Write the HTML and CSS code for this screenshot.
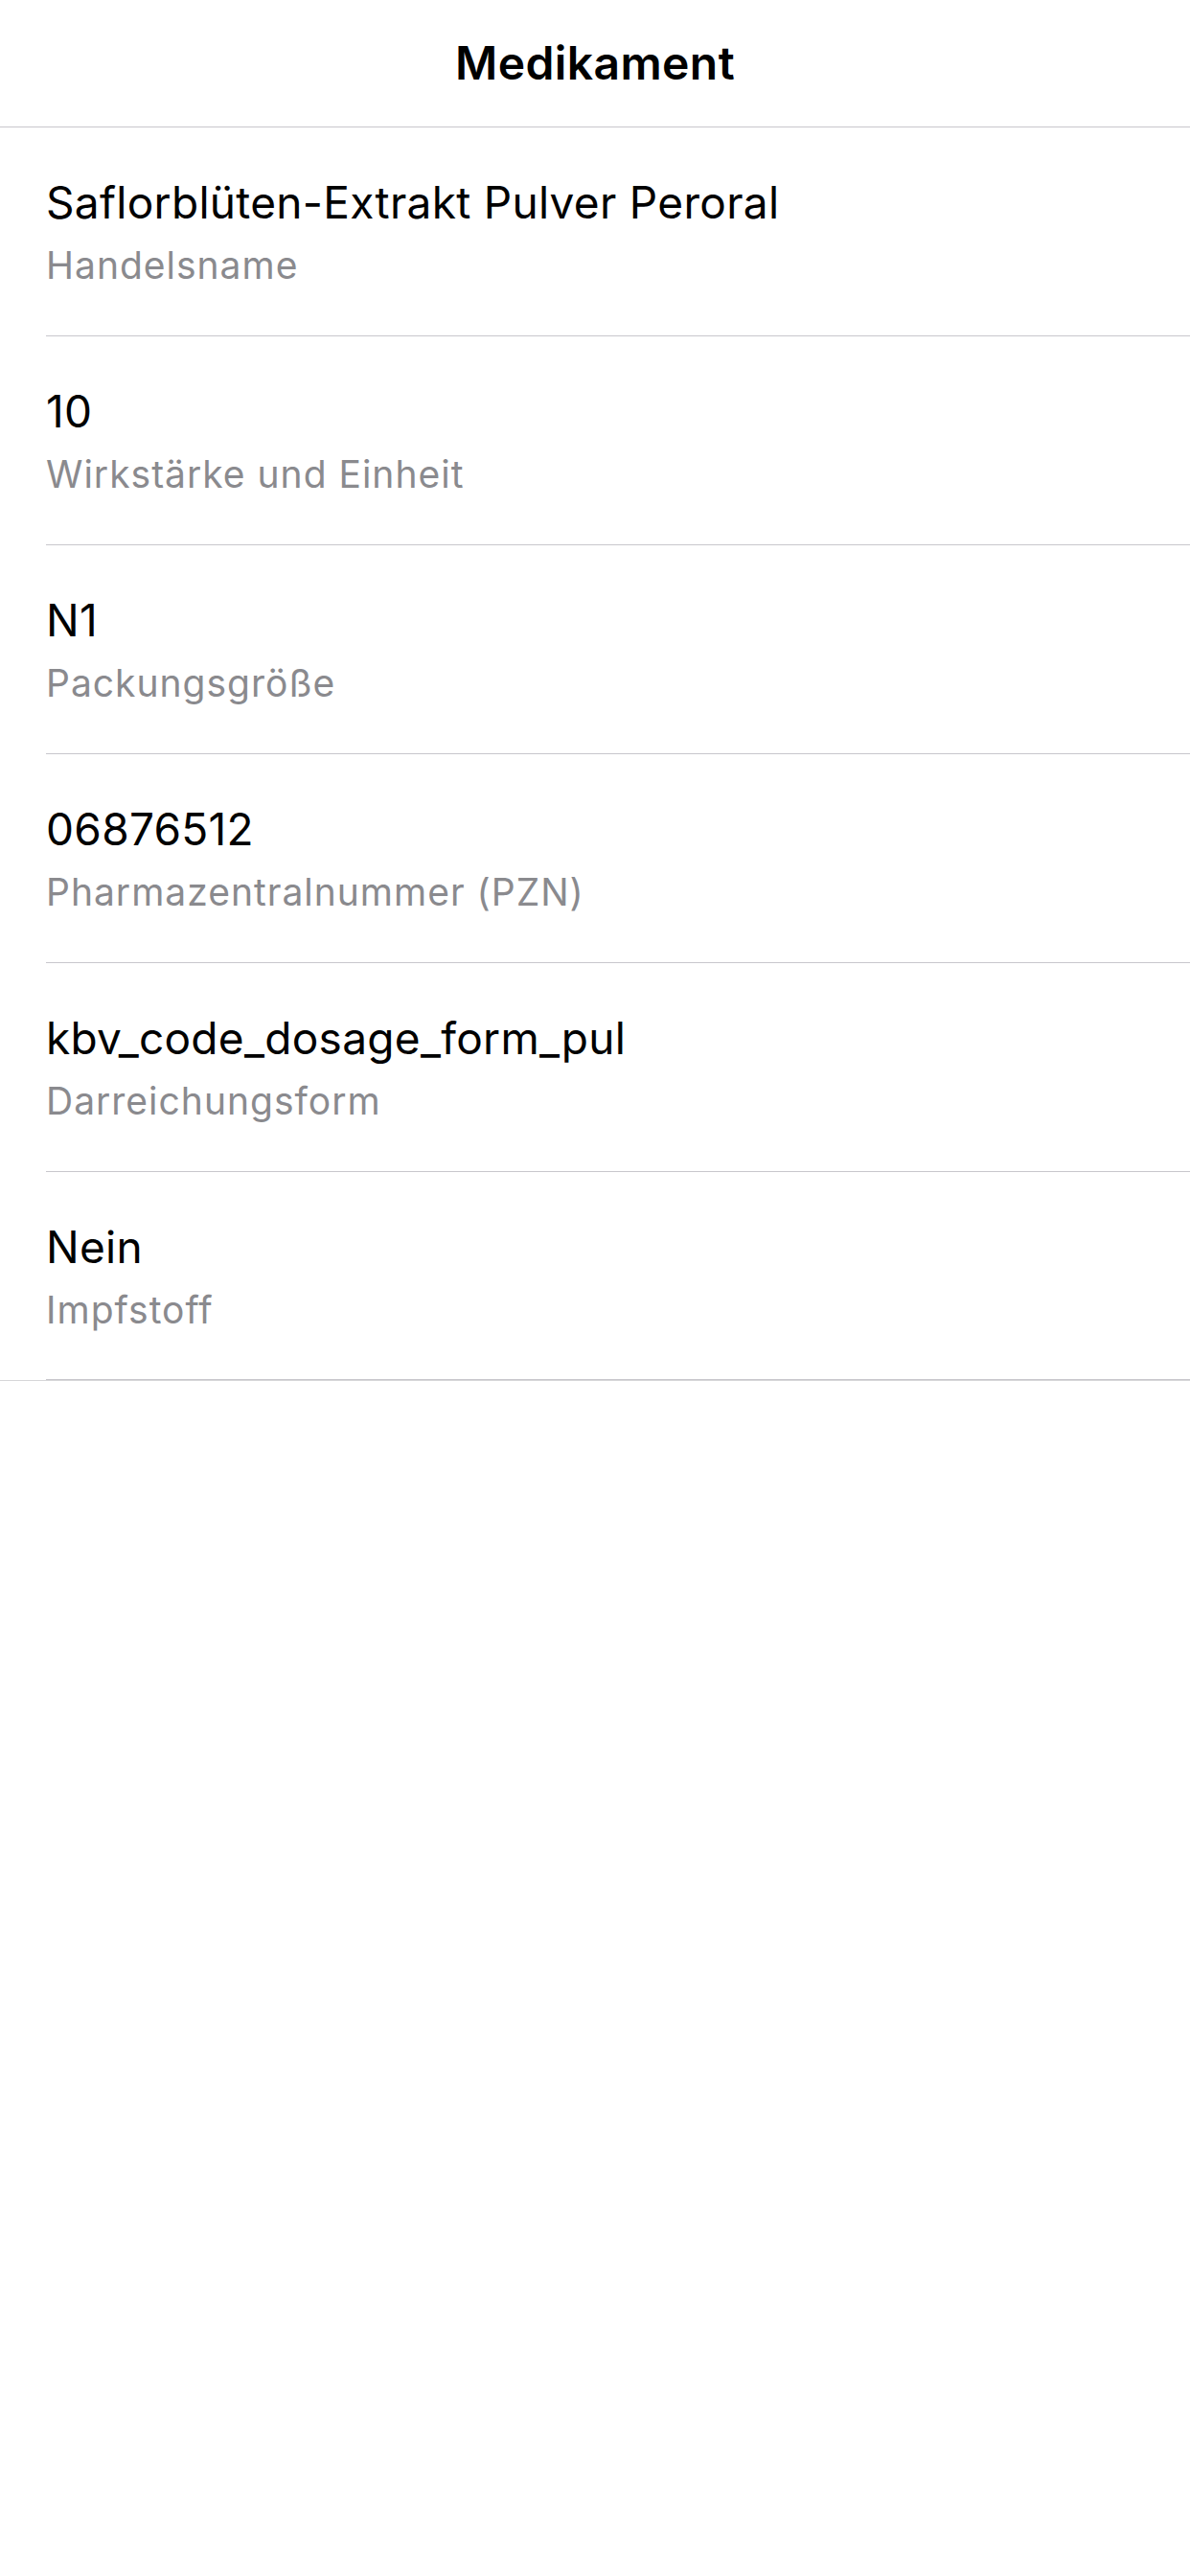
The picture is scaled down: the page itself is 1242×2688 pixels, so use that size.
FILE: index.html
```html
<!DOCTYPE html>
<html lang="de">
<head>
<meta charset="utf-8">
<title>Medikament</title>
<link rel="stylesheet" href="styles.css">
</head>
<body>
<header class="nav">
  <h1 class="nav-title">Medikament</h1>
</header>
<ul class="list">
  <li class="row">
    <div class="value">Saflorblüten-Extrakt Pulver Peroral</div>
    <div class="label">Handelsname</div>
  </li>
  <li class="row">
    <div class="value">10</div>
    <div class="label">Wirkstärke und Einheit</div>
  </li>
  <li class="row">
    <div class="value">N1</div>
    <div class="label">Packungsgröße</div>
  </li>
  <li class="row">
    <div class="value">06876512</div>
    <div class="label">Pharmazentralnummer (PZN)</div>
  </li>
  <li class="row">
    <div class="value">kbv_code_dosage_form_pul</div>
    <div class="label">Darreichungsform</div>
  </li>
  <li class="row">
    <div class="value">Nein</div>
    <div class="label">Impfstoff</div>
  </li>
</ul>
</body>
</html>
```
FILE: styles.css
```css
* { box-sizing: border-box; }
html, body {
  margin: 0;
  padding: 0;
  background: #ffffff;
  font-family: Inter, "Liberation Sans", sans-serif;
  color: #000000;
}
.nav {
  height: 133px;
  display: flex;
  align-items: center;
  justify-content: center;
  border-bottom: 1px solid #c8c7cc;
}
.nav-title {
  margin: 0;
  font-size: 48px;
  font-weight: 600;
  line-height: 60px;
  letter-spacing: 0.4px;
}
.list {
  list-style: none;
  margin: 0;
  padding: 0;
  border-bottom: 1px solid #d6d6d8;
}
.row {
  margin-left: 48px;
  padding: 50px 0 0 0;
  border-bottom: 1px solid #c8c7cc;
  height: 218px;
}
.row:last-child {
  height: 217px;
}
.value {
  font-size: 46px;
  line-height: 56px;
  letter-spacing: 0.3px;
  color: #000000;
}
.label {
  margin-top: 14px;
  font-size: 39px;
  line-height: 48px;
  letter-spacing: 1px;
  color: #8a8a8e;
}
```
